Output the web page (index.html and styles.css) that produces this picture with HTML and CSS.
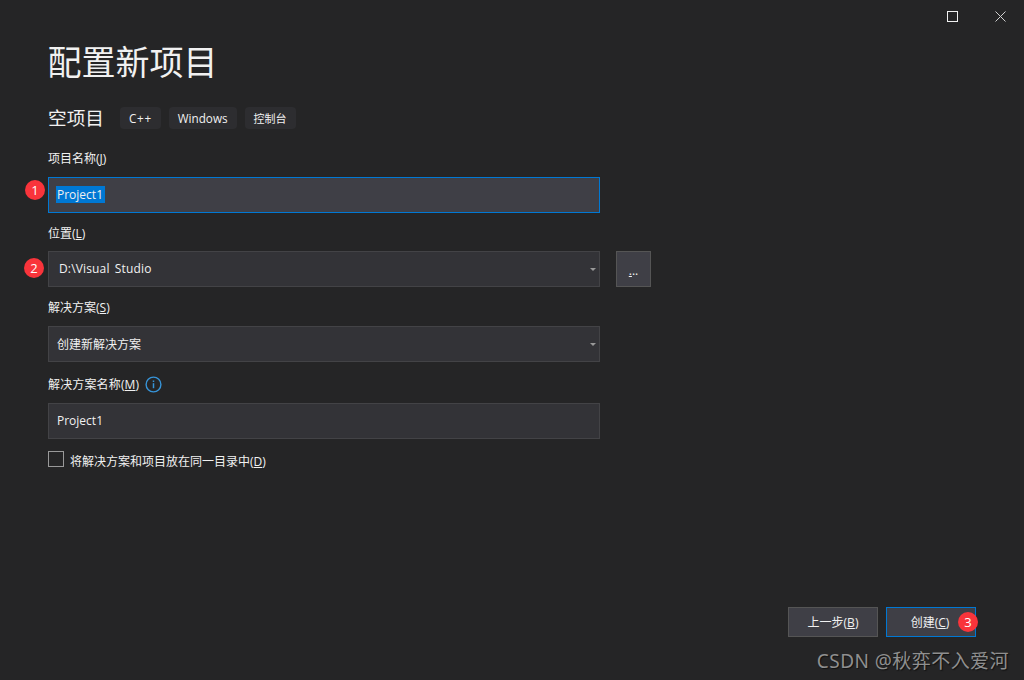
FILE: index.html
```html
<!DOCTYPE html>
<html lang="zh-CN">
<head>
<meta charset="utf-8">
<title>配置新项目</title>
<link rel="stylesheet" href="styles.css">
</head>
<body>
<div class="window">
  <div class="titlebar">
    <svg class="winicon" width="11" height="11" viewBox="0 0 11 11"><rect x="0.5" y="0.5" width="10" height="10" fill="none" stroke="#f1f1f1" stroke-width="1"/></svg>
    <svg class="winicon" width="11" height="11" viewBox="0 0 11 11"><path d="M0.5 0.5L10.5 10.5M10.5 0.5L0.5 10.5" fill="none" stroke="#d0d0d0" stroke-width="1"/></svg>
  </div>
  <main class="content">
    <h1 class="title">配置新项目</h1>
    <div class="subhead">
      <h2 class="subtitle">空项目</h2>
      <span class="tag tag-cpp">C++</span>
      <span class="tag">Windows</span>
      <span class="tag tag-cjk">控制台</span>
    </div>
    <div class="label label-name"><span>项目名称(<u>J</u>)</span></div>
    <div class="field field-name">
      <span class="badge badge-1">1</span>
      <div class="input focused latin"><span class="selected">Project1</span></div>
    </div>
    <div class="label label-loc"><span>位置(<u>L</u>)</span></div>
    <div class="field field-loc">
      <span class="badge badge-2">2</span>
      <div class="input select loc-text latin"><span>D:\Visual Studio</span><span class="caret"></span></div>
      <div class="browse"><span class="dots"><u>.</u>..</span></div>
    </div>
    <div class="label label-sol"><span>解决方案(<u>S</u>)</span></div>
    <div class="field field-sol">
      <div class="input select"><span>创建新解决方案</span><span class="caret"></span></div>
    </div>
    <div class="label label-solname"><span class="wide">解决方案名称(<u>M</u>)</span>
      <svg class="info" width="17" height="17" viewBox="0 0 17 17"><circle cx="8.5" cy="8.5" r="7.4" fill="none" stroke="#3794d8" stroke-width="1.4"/><rect x="7.75" y="7.2" width="1.5" height="5" fill="#3794d8"/><rect x="7.75" y="4.5" width="1.5" height="1.5" fill="#3794d8"/></svg>
    </div>
    <div class="field field-solname">
      <div class="input latin"><span>Project1</span></div>
    </div>
    <div class="check-row">
      <span class="checkbox"></span>
      <span class="check-text">将解决方案和项目放在同一目录中(<u>D</u>)</span>
    </div>
  </main>
  <footer class="footer">
    <div class="btn"><span>上一步(<u>B</u>)</span></div>
    <div class="btn primary"><span>创建(<u>C</u>)</span><span class="badge badge-3">3</span></div>
  </footer>
  <div class="watermark">CSDN @秋弈不入爱河</div>
</div>
</body>
</html>
```
FILE: styles.css
```css
* { box-sizing: border-box; }
html, body { margin: 0; padding: 0; }
body {
  width: 1024px;
  height: 680px;
  overflow: hidden;
  background: #252526;
  color: #f1f1f1;
  font-family: "Open Sans", "Noto Sans CJK SC", sans-serif;
  font-size: 12px;
}
.window {
  position: relative;
  width: 1024px;
  height: 680px;
  display: flex;
  flex-direction: column;
}
.titlebar {
  display: flex;
  justify-content: flex-end;
  gap: 37px;
  height: 32px;
  padding: 11px 18px 0 0;
}
.winicon { display: block; }
.content {
  flex: 1;
  padding: 0 0 0 48px;
  display: flex;
  flex-direction: column;
}
.title {
  margin: 5px 0 0 -0.5px;
  font-size: 34px;
  font-weight: 400;
  line-height: 48px;
  font-family: "Noto Sans CJK SC", sans-serif;
}
.subhead {
  display: flex;
  align-items: center;
  gap: 8px;
  margin-top: 21px;
  height: 24px;
}
.subtitle {
  margin: 0 8px 2px 0;
  font-size: 18.67px;
  font-weight: 400;
  line-height: 24px;
  font-family: "Noto Sans CJK SC", sans-serif;
}
.tag {
  display: flex;
  align-items: center;
  height: 22px;
  padding: 0 9px;
  background: #2d2d30;
  border-radius: 4px;
  font-size: 11.7px;
}
.tag-cpp { letter-spacing: 0.7px; }
.tag-cjk { font-size: 11px; }
.label {
  display: flex;
  align-items: center;
  height: 18px;
  padding-top: 2px;
  line-height: 16px;
  white-space: pre;
}
.label-name { margin-top: 19px; }
.label-loc { margin-top: 11px; }
.label-sol { margin-top: 11px; }
.label-solname { margin-top: 13px; padding-top: 0; }
.label-solname .wide { position: relative; top: 1px; }
.wide { letter-spacing: 0.15px; }
.field {
  position: relative;
  display: flex;
  gap: 16px;
  margin-top: 10px;
}
.field-loc { margin-top: 9px; }
.input {
  position: relative;
  display: flex;
  align-items: center;
  width: 552px;
  height: 36px;
  padding: 0 8px;
  background: #333337;
  border: 1px solid #434346;
  color: #f1f1f1;
}
.input.latin { padding-bottom: 1px; }
.input.focused {
  background: #3f3f46;
  border-color: #0078d4;
}
.loc-text { padding-left: 10px; word-spacing: 2px; letter-spacing: 0.15px; }
.selected {
  background: #0078d4;
  padding: 0 2px 0 1px;
  margin-left: -1px;
  line-height: 17px;
}
.caret {
  position: absolute;
  right: 3px;
  top: 16px;
  width: 0;
  height: 0;
  border-left: 3.5px solid transparent;
  border-right: 3.5px solid transparent;
  border-top: 3px solid #999;
}
.browse {
  width: 35px;
  height: 36px;
  background: #3f3f46;
  border: 1px solid #555;
  display: flex;
  align-items: center;
  justify-content: center;
}
.dots { font-size: 12px; line-height: 12px; position: relative; top: 2px; }
.info { margin-left: 6px; }
.badge {
  position: absolute;
  width: 20px;
  height: 20px;
  border-radius: 50%;
  background: #f9343b;
  color: #fff;
  font-size: 13px;
  display: flex;
  align-items: center;
  justify-content: center;
  line-height: 20px;
}
.badge-1 { left: -23px; top: 3px; }
.badge-2 { left: -24px; top: 7px; }
.badge-3 { left: 71px; top: 4px; }
.check-row {
  display: flex;
  align-items: center;
  gap: 6px;
  margin-top: 12px;
  height: 16px;
}
.checkbox {
  width: 16px;
  height: 16px;
  border: 1px solid #999;
  background: transparent;
}
.check-text { position: relative; top: 2px; }
.footer {
  display: flex;
  justify-content: flex-end;
  gap: 8px;
  padding: 0 48px 43px 0;
}
.btn {
  position: relative;
  width: 90px;
  height: 30px;
  display: flex;
  align-items: center;
  justify-content: center;
  background: #3f3f46;
  border: 1px solid #555;
}
.btn.primary { border-color: #0078d4; padding-right: 2px; }
.watermark {
  position: absolute;
  right: 15px;
  bottom: 7px;
  font-size: 19px;
  line-height: 24px;
  letter-spacing: 0.45px;
  color: #8f8f8f;
  text-shadow: 1px 1px 1px #111;
  font-family: "Noto Sans", "Noto Sans CJK SC", sans-serif;
  white-space: nowrap;
}
```
